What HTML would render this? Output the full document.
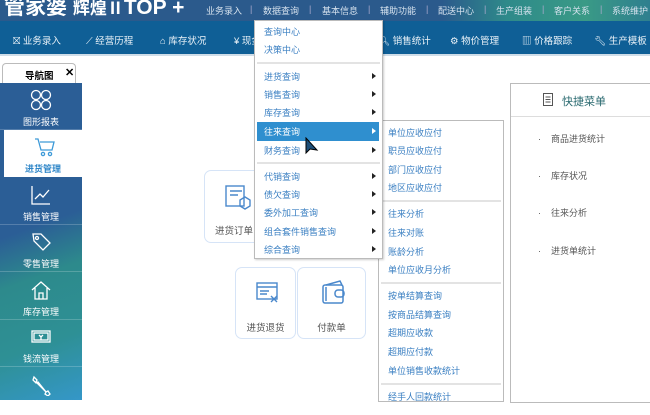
<!DOCTYPE html>
<html><head><meta charset="utf-8"><style>
*{margin:0;padding:0;box-sizing:border-box}
body{width:650px;height:400px;overflow:hidden;position:relative;background:#fff;font-family:"Liberation Sans","Noto Sans CJK SC",sans-serif;font-size:9px}
.abs{position:absolute}
#top{left:0;top:0;width:650px;height:21px;background:linear-gradient(90deg,#2b5a8c 0%,#2b5a8c 68%,#2e8a8a 78%,#3a9a86 90%,#2f7f8f 100%);overflow:hidden}
#logo{left:4px;top:-9px;color:#fff;font-size:21px;font-weight:bold;letter-spacing:0;white-space:nowrap}
.tl{top:4px;color:#d6e2ee;font-size:9px;white-space:nowrap}
#nav{left:0;top:21px;width:650px;height:35px;background:#0f5f96;border-bottom:2px solid #cfdde8}
.nv{top:33px;color:#eaf2f8;font-size:9.5px;white-space:nowrap}
#tab{left:2px;top:63px;width:74px;height:21px;border:1px solid #bbb;border-bottom:none;border-radius:4px 4px 0 0;background:#fff}
#side{left:0;top:83px;width:82px;height:317px;background:linear-gradient(160deg,#2b5e96 0%,#2b5e96 45%,#2d8a8c 60%,#2e9095 80%,#3597c8 100%)}
.si{position:absolute;left:0;width:82px;height:47px;border-bottom:1px solid rgba(255,255,255,.2);color:#fff;text-align:center;font-size:9px}
.si span{position:absolute;left:0;right:0;top:32px}
.si svg{position:absolute;left:30px;top:6px}
#m1{left:254px;top:20px;width:129px;height:239px;background:#fff;border:1px solid #bbb;box-shadow:1px 1px 2px rgba(0,0,0,.2)}
#m2{left:378px;top:120px;width:126px;height:282px;background:#fff;border:1px solid #bbb}
.mi{position:absolute;left:9px;color:#3a7fc2;font-size:9px;white-space:nowrap}
.ar{position:absolute;right:6px;width:0;height:0;border-left:4px solid #222;border-top:3px solid transparent;border-bottom:3px solid transparent}
.sep{position:absolute;left:2px;right:2px;height:2px;background:#e3e3e3}
.card{border:1px solid #d6e4f7;border-radius:7px;background:#fff;text-align:center;color:#555;font-size:9.5px}
#rp{left:510px;top:83px;width:145px;height:320px;border:1px solid #bbb;background:#fff}
.qi{position:absolute;left:27px;color:#555;font-size:9px;white-space:nowrap}
</style></head><body>
<div id="top" class="abs"><div id="logo" class="abs">管家婆 <span style="font-size:17px">辉煌Ⅱ</span>TOP +</div></div>
<div class="abs tl" style="left:206px">业务录入</div>
<div class="abs tl" style="left:250px;color:#aac">|</div>
<div class="abs tl" style="left:263px">数据查询</div>
<div class="abs tl" style="left:309px;color:#aac">|</div>
<div class="abs tl" style="left:322px">基本信息</div>
<div class="abs tl" style="left:368px;color:#aac">|</div>
<div class="abs tl" style="left:380px">辅助功能</div>
<div class="abs tl" style="left:426px;color:#aac">|</div>
<div class="abs tl" style="left:438px">配送中心</div>
<div class="abs tl" style="left:484px;color:#aac">|</div>
<div class="abs tl" style="left:496px">生产组装</div>
<div class="abs tl" style="left:542px;color:#aac">|</div>
<div class="abs tl" style="left:554px">客户关系</div>
<div class="abs tl" style="left:600px;color:#aac">|</div>
<div class="abs tl" style="left:612px">系统维护</div>
<div id="nav" class="abs"></div>
<div class="abs nv" style="left:13px">⛝ 业务录入</div>
<div class="abs nv" style="left:86px">⟋ 经营历程</div>
<div class="abs nv" style="left:160px">⌂ 库存状况</div>
<div class="abs nv" style="left:234px">¥ 现金</div>
<div class="abs nv" style="left:378px">🔍︎ 销售统计</div>
<div class="abs nv" style="left:450px">⚙ 物价管理</div>
<div class="abs nv" style="left:522px">▥ 价格跟踪</div>
<div class="abs nv" style="left:594px">🔧︎ 生产模板</div>
<div id="tab" class="abs"><span class="abs" style="left:22px;top:4px;font-weight:bold;font-size:9.5px">导航图</span><span class="abs" style="left:62px;top:2px;font-weight:bold;font-size:11px">✕</span></div>
<div id="side" class="abs">
<div class="si" style="top:0"><svg width="22" height="22" viewBox="0 0 22 22" fill="none" stroke="#fff" stroke-width="1.3"><circle cx="6" cy="6" r="4.5"/><circle cx="16" cy="6" r="4.5"/><circle cx="6" cy="16" r="4.5"/><circle cx="16" cy="16" r="4.5"/></svg><span>图形报表</span></div>
<div class="si" style="top:47px;background:#fff;color:#2e86c8;font-weight:bold;left:4px;width:78px"><svg width="22" height="22" viewBox="0 0 22 22" fill="none" stroke="#3d9ad8" stroke-width="1.3"><path d="M1 3h3l3 11h11l2-8H6"/><circle cx="9" cy="18" r="1.6"/><circle cx="16" cy="18" r="1.6"/></svg><span>进货管理</span></div>
<div class="si" style="top:95px"><svg width="22" height="22" viewBox="0 0 22 22" fill="none" stroke="#fff" stroke-width="1.3"><path d="M2 2v18h18M5 15l5-5 3 3 6-7"/></svg><span>销售管理</span></div>
<div class="si" style="top:142px"><svg width="22" height="22" viewBox="0 0 22 22" fill="none" stroke="#fff" stroke-width="1.3"><path d="M3 3h8l9 9-7 7-9-9z"/><circle cx="7" cy="7" r="1.5"/></svg><span>零售管理</span></div>
<div class="si" style="top:190px"><svg width="22" height="22" viewBox="0 0 22 22" fill="none" stroke="#fff" stroke-width="1.3"><path d="M2 11l9-8 9 8M5 9v11h12V9M9 20v-6h4v6"/></svg><span>库存管理</span></div>
<div class="si" style="top:237px"><svg width="22" height="22" viewBox="0 0 22 22" fill="none" stroke="#fff" stroke-width="1.3"><rect x="2" y="5" width="18" height="11"/><rect x="4" y="7" width="14" height="7"/><path d="M9 9l2 2 2-2M11 11v3"/></svg><span>钱流管理</span></div>
<div class="si" style="top:285px;border:none"><svg width="22" height="22" viewBox="0 0 22 22" fill="none" stroke="#fff" stroke-width="1.3"><path d="M4 3l3 3-1 2 10 10 2-1 2 3-2 2-3-2 1-2L8 8 6 9 3 6z"/></svg></div>
</div>
<div class="abs card" style="left:204px;top:170px;width:60px;height:73px"><svg class="abs" style="left:18px;top:12px" width="28" height="28" viewBox="0 0 28 28" fill="none" stroke="#4a88cc" stroke-width="1.4"><rect x="3" y="3" width="18" height="20"/><path d="M7 8h12M7 12h8"/><path d="M17 17l5-3 5 3v6l-5 3-5-3z"/></svg><span class="abs" style="left:0;right:0;top:52px">进货订单</span></div>
<div class="abs card" style="left:235px;top:267px;width:61px;height:72px"><svg class="abs" style="left:19px;top:13px" width="26" height="24" viewBox="0 0 26 24" fill="none" stroke="#4a88cc" stroke-width="1.4"><rect x="2" y="2" width="20" height="16"/><path d="M2 6h20M5 10h9M5 13h7M16 15l6 6M22 15l-6 6"/></svg><span class="abs" style="left:0;right:0;top:52px">进货退货</span></div>
<div class="abs card" style="left:297px;top:267px;width:69px;height:72px"><svg class="abs" style="left:22px;top:11px" width="28" height="26" viewBox="0 0 28 26" fill="none" stroke="#4a88cc" stroke-width="1.5"><path d="M6 6l14-4 2 4"/><rect x="3" y="6" width="20" height="18" rx="2"/><path d="M6 8v14"/><rect x="15" y="11" width="9" height="7" rx="3"/></svg><span class="abs" style="left:0;right:0;top:52px">付款单</span></div>
<div id="rp" class="abs">
<div class="abs" style="left:0;right:0;top:0;height:33px;border-bottom:1px solid #ddd"></div>
<svg class="abs" style="left:32px;top:9px" width="10" height="13" viewBox="0 0 10 13" fill="none" stroke="#555" stroke-width="1"><rect x=".5" y=".5" width="9" height="12"/><path d="M2.5 4h5M2.5 6.5h5M2.5 9h5"/></svg>
<span class="abs" style="left:51px;top:9px;color:#2a6a70;font-size:11px">快捷菜单</span>
<span class="qi" style="top:48px">·&nbsp;&nbsp;&nbsp;&nbsp;商品进货统计</span>
<span class="qi" style="top:85px">·&nbsp;&nbsp;&nbsp;&nbsp;库存状况</span>
<span class="qi" style="top:122px">·&nbsp;&nbsp;&nbsp;&nbsp;往来分析</span>
<span class="qi" style="top:160px">·&nbsp;&nbsp;&nbsp;&nbsp;进货单统计</span>
</div>
<div id="m2" class="abs">
<span class="mi" style="top:5px">单位应收应付</span>
<span class="mi" style="top:23px">职员应收应付</span>
<span class="mi" style="top:42px">部门应收应付</span>
<span class="mi" style="top:60px">地区应收应付</span>
<div class="sep" style="top:79px"></div>
<span class="mi" style="top:86px">往来分析</span>
<span class="mi" style="top:105px">往来对账</span>
<span class="mi" style="top:124px">账龄分析</span>
<span class="mi" style="top:142px">单位应收月分析</span>
<div class="sep" style="top:161px"></div>
<span class="mi" style="top:168px">按单结算查询</span>
<span class="mi" style="top:187px">按商品结算查询</span>
<span class="mi" style="top:205px">超期应收款</span>
<span class="mi" style="top:224px">超期应付款</span>
<span class="mi" style="top:243px">单位销售收款统计</span>
<div class="sep" style="top:262px"></div>
<span class="mi" style="top:269px">经手人回款统计</span>
</div>
<div id="m1" class="abs">
<span class="mi" style="top:4px">查询中心</span>
<span class="mi" style="top:22px">决策中心</span>
<div class="sep" style="top:41px"></div>
<span class="mi" style="top:49px">进货查询</span><i class="ar" style="top:52px"></i>
<span class="mi" style="top:67px">销售查询</span><i class="ar" style="top:70px"></i>
<span class="mi" style="top:85px">库存查询</span><i class="ar" style="top:88px"></i>
<div class="abs" style="left:2px;top:101px;width:122px;height:19px;background:#2f8fcf"></div>
<span class="mi" style="top:104px;color:#fff">往来查询</span><i class="ar" style="top:107px;border-left-color:#fff"></i>
<span class="mi" style="top:123px">财务查询</span><i class="ar" style="top:126px"></i>
<div class="sep" style="top:141px"></div>
<span class="mi" style="top:149px">代销查询</span><i class="ar" style="top:152px"></i>
<span class="mi" style="top:167px">债欠查询</span><i class="ar" style="top:170px"></i>
<span class="mi" style="top:185px">委外加工查询</span><i class="ar" style="top:188px"></i>
<span class="mi" style="top:204px">组合套件销售查询</span><i class="ar" style="top:207px"></i>
<span class="mi" style="top:222px">综合查询</span><i class="ar" style="top:225px"></i>
</div>
<svg class="abs" style="left:305px;top:137px" width="14" height="18" viewBox="0 0 14 18"><path d="M1 1l0 15 4-4 7 1z" fill="#1e4f78" stroke="#000" stroke-width="1"/></svg>
</body></html>
